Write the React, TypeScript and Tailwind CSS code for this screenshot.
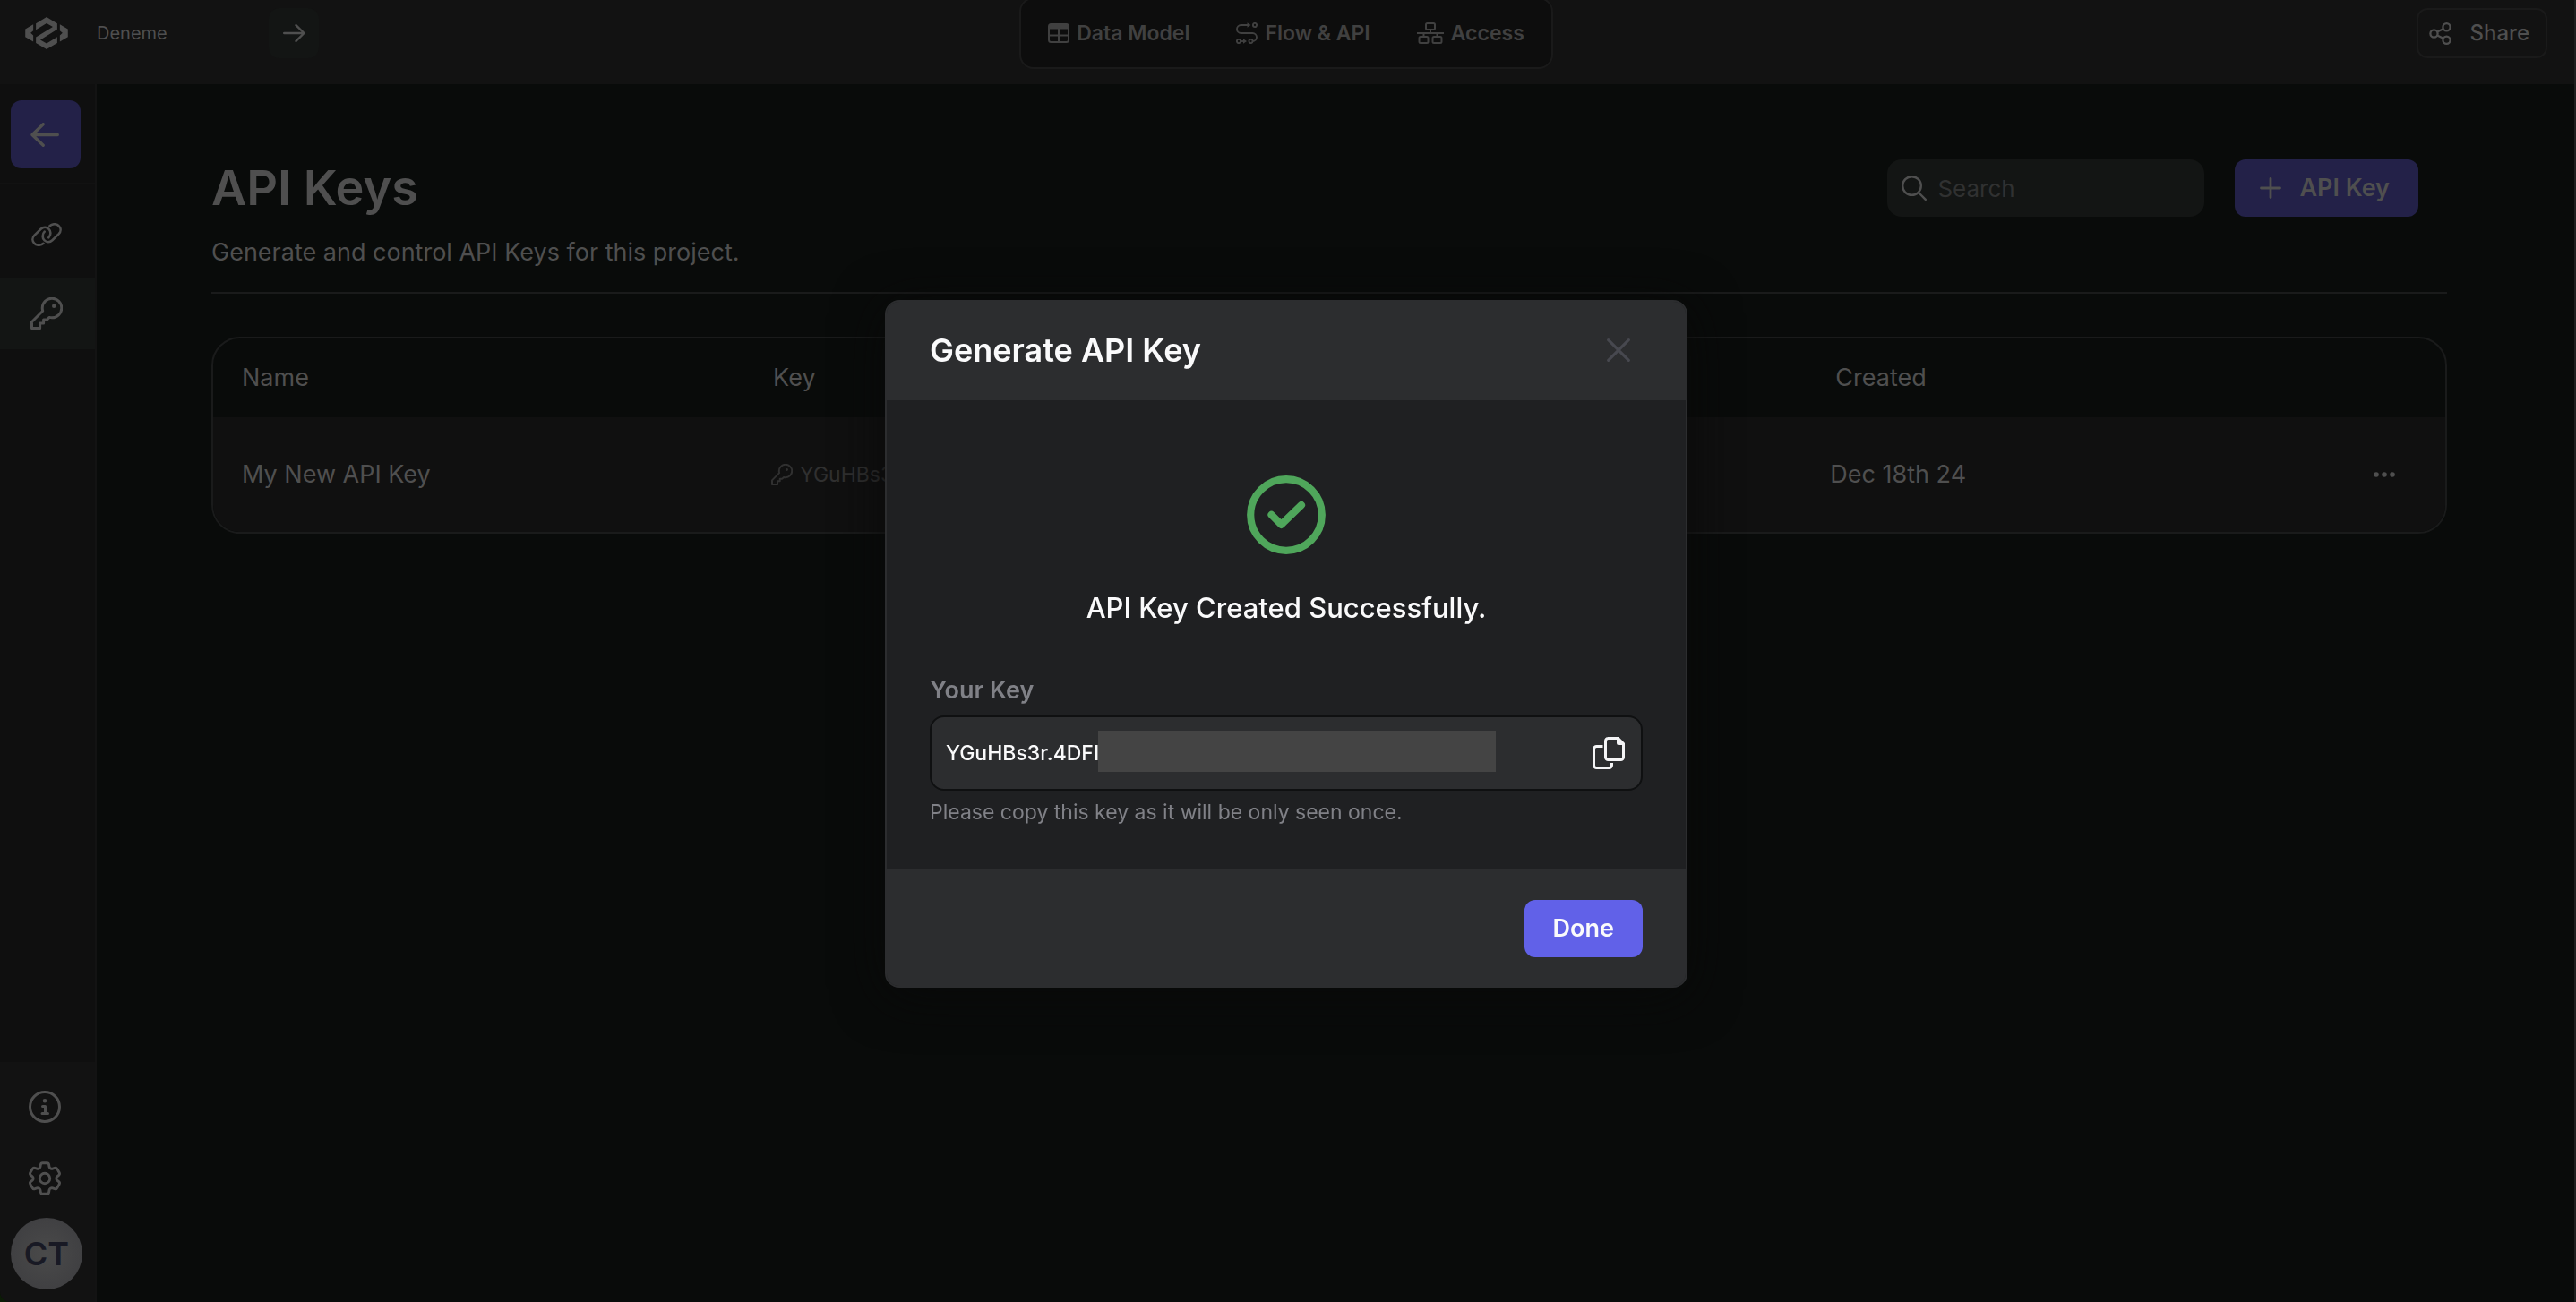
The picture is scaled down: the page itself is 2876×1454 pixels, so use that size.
import type { ReactNode } from "react";
import { HiOutlineCog6Tooth } from "react-icons/hi2";

function Logo() {
  return (
    <svg viewBox="84 60 144 109" className="h-9 w-12" fill="currentColor" aria-hidden="true">
      <path d="M120 82 156 60l36 22v20l-57 35 21 12 36-22v21l-36 21-36-21v-20l57-35-21-12-36 22z" />
      <path d="M84 101l27-16v21l-9 8 9 8v21l-27-16z" />
      <path d="M228 101l-27-16v21l9 8-9 8v21l27-16z" />
    </svg>
  );
}

function ArrowRight() {
  return (
    <svg viewBox="0 0 25 20" className="h-5 w-[25px]" fill="none" stroke="currentColor" strokeWidth="2.4" strokeLinecap="round" strokeLinejoin="round" aria-hidden="true">
      <path d="M1.2 10h22M14.5 1.2 23.5 10l-9 8.8" />
    </svg>
  );
}

function ArrowLeft() {
  return (
    <svg viewBox="0 0 32 27" className="h-[27px] w-8" fill="none" stroke="currentColor" strokeWidth="3.4" strokeLinecap="round" strokeLinejoin="round" aria-hidden="true">
      <path d="M30.3 13.5H2M14.2 1.7 2 13.5l12.2 11.8" />
    </svg>
  );
}

function LinkIcon() {
  return (
    <svg viewBox="0 0 34 26" className="h-[26px] w-[34px]" fill="none" stroke="currentColor" strokeWidth="2.6" strokeLinecap="round" aria-hidden="true">
      <path d="M13.5 22.8C10.5 25.4 5.5 25.4 3.2 22.7.7 20 .9 16.3 3.3 13.8l7.3-7C13.2 4.3 17 4.3 19.4 6.6c2.6 2.4 2.7 6.9-.1 9.7" />
      <path d="M20.5 3.2c3-2.6 8-2.6 10.3.1 2.5 2.7 2.3 6.4-.1 8.9l-7.3 7c-2.6 2.5-6.4 2.5-8.8.2-2.6-2.4-2.7-6.9.1-9.7" />
    </svg>
  );
}

function KeyIcon({ className }: { className: string }) {
  return (
    <svg viewBox="0 0 36 36" className={className} fill="none" stroke="currentColor" strokeWidth="3" strokeLinejoin="round" aria-hidden="true">
      <path d="M13.2 12A10.8 10.8 0 1 1 24 22.8q-1.5 0-2.9-.4L18.6 25h-4v4h-4v5.5H1.5v-7L13.7 15.2q-.5-1.6-.5-3.2Z" />
      <circle cx="26.2" cy="9.8" r="2.2" fill="currentColor" stroke="none" />
    </svg>
  );
}

function InfoIcon() {
  return (
    <svg viewBox="0 0 36 36" className="size-9" fill="none" stroke="currentColor" strokeWidth="3" aria-hidden="true">
      <circle cx="18" cy="18" r="16.5" />
      <circle cx="18" cy="11.3" r="2.3" fill="currentColor" stroke="none" />
      <path d="M15.5 17.5h3v8M15 25.5h6.5" strokeLinecap="round" strokeLinejoin="round" />
    </svg>
  );
}

function TableIcon() {
  return (
    <svg viewBox="0 0 24 22" className="h-[22px] w-6" fill="none" stroke="currentColor" strokeWidth="2" aria-hidden="true">
      <rect x="1" y="1" width="22" height="20" rx="2.5" />
      <path d="M1 4h22" strokeWidth="5" />
      <path d="M1 13.5h22M12 5v16" />
    </svg>
  );
}

function FlowIcon() {
  return (
    <svg viewBox="0 0 24 24" className="size-6" fill="none" stroke="currentColor" strokeWidth="1.9" aria-hidden="true">
      <circle cx="21" cy="3" r="2.1" />
      <circle cx="3" cy="21" r="2.1" />
      <circle cx="16.5" cy="21" r="2.1" />
      <path d="M13 3H5.5a4.5 4.5 0 0 0 0 9H18.5a4.5 4.5 0 0 1 0 9" />
      <path d="M5 21h3" />
      <path d="M12.5.2 16.5 3l-4 2.8zM8 18.2 12 21l-4 2.8z" fill="currentColor" stroke="none" />
    </svg>
  );
}

function AccessIcon() {
  return (
    <svg viewBox="0 0 30 24" className="h-6 w-[30px]" fill="none" stroke="currentColor" strokeWidth="2" aria-hidden="true">
      <rect x="10" y="1" width="10" height="7" rx="1.5" />
      <rect x="2.5" y="16" width="10" height="7" rx="1.5" />
      <rect x="17.5" y="16" width="10" height="7" rx="1.5" />
      <path d="M0 12h30M15 8v4M7.5 12v4M22.5 12v4" />
    </svg>
  );
}

function ShareIcon() {
  return (
    <svg viewBox="0 0 26 25" className="h-[25px] w-[26px]" fill="none" stroke="currentColor" strokeWidth="2.3" aria-hidden="true">
      <circle cx="5.5" cy="12.5" r="4.1" />
      <circle cx="19.5" cy="5.3" r="4.1" />
      <circle cx="19.5" cy="19.7" r="4.1" />
      <path d="M9.2 10.6l6.6-3.4M9.2 14.4l6.6 3.4" />
    </svg>
  );
}

function SearchIcon() {
  return (
    <svg viewBox="0 0 28 28" className="size-7 shrink-0" fill="none" stroke="currentColor" strokeWidth="2.4" strokeLinecap="round" aria-hidden="true">
      <circle cx="11.5" cy="11.5" r="10.3" />
      <path d="M19 19l7.8 7.8" />
    </svg>
  );
}

function PlusIcon() {
  return (
    <svg viewBox="0 0 24 24" className="size-6" fill="none" stroke="currentColor" strokeWidth="2.8" strokeLinecap="round" aria-hidden="true">
      <path d="M12 1.5v21M1.5 12h21" />
    </svg>
  );
}

function DotsIcon() {
  return (
    <svg viewBox="0 0 24 6" className="h-1.5 w-6" fill="currentColor" aria-hidden="true">
      <circle cx="3" cy="3" r="2.8" />
      <circle cx="12" cy="3" r="2.8" />
      <circle cx="21" cy="3" r="2.8" />
    </svg>
  );
}

function CloseIcon() {
  return (
    <svg viewBox="0 0 26 26" className="size-[26px]" fill="none" stroke="currentColor" strokeWidth="3.2" strokeLinecap="round" aria-hidden="true">
      <path d="M1.7 1.7l22.6 22.6M24.3 1.7l-22.6 22.6" />
    </svg>
  );
}

function CheckIcon() {
  return (
    <svg viewBox="0 0 88 88" className="size-[88px]" fill="none" stroke="currentColor" strokeWidth="8.2" strokeLinecap="round" strokeLinejoin="round" aria-hidden="true">
      <circle cx="44" cy="44" r="39.8" />
      <path d="M27.5 43.8 38.5 54.8 61 33" />
    </svg>
  );
}

function CopyIcon() {
  return (
    <svg viewBox="0 0 36 36" className="size-9" fill="none" stroke="currentColor" strokeWidth="3" aria-hidden="true">
      <path d="M17 1.5h11.5L34.5 7.5V22.5a3 3 0 0 1-3 3H17.5a3 3 0 0 1-3-3V4.5a3 3 0 0 1 3-3z" />
      <path d="M27 1v6a2 2 0 0 0 2 2h6.5V7L29 .5z" fill="currentColor" stroke="none" />
      <path d="M11.5 10.5h-7a3 3 0 0 0-3 3v18a3 3 0 0 0 3 3h14a3 3 0 0 0 3-3V29" />
    </svg>
  );
}

function NavTab({ icon, label }: { icon: ReactNode; label: string }) {
  return (
    <a href="#" className="flex items-center gap-2 text-[23px] font-semibold">
      {icon}
      {label}
    </a>
  );
}

function Header() {
  return (
    <header className="grid h-[94px] shrink-0 grid-cols-[1fr_auto_1fr] items-center bg-[#121212] pr-[30px] pb-5 pl-7 text-[#4f4f4f]">
      <div className="flex items-center">
        <Logo />
        <div className="ml-8 flex w-[248px] items-center justify-between">
          <span className="text-[20px]">Deneme</span>
          <button type="button" aria-label="Open project" className="flex size-14 items-center justify-center rounded-xl bg-[#131514]">
            <ArrowRight />
          </button>
        </div>
      </div>
      <nav aria-label="Sections" className="-my-2 flex h-20 items-center gap-[52px] rounded-2xl border-2 border-[#1a1a1a] bg-[#0d0d0d] px-[30px] text-[#404040]">
        <NavTab icon={<TableIcon />} label="Data Model" />
        <NavTab icon={<FlowIcon />} label="Flow & API" />
        <NavTab icon={<AccessIcon />} label="Access" />
      </nav>
      <button type="button" className="flex h-14 items-center gap-5 justify-self-end rounded-xl border-2 border-[#1a1a1a] pr-[18px] pl-3 text-[24px] font-medium">
        <ShareIcon />
        Share
      </button>
    </header>
  );
}

function Sidebar() {
  return (
    <aside className="flex w-[108px] shrink-0 flex-col overflow-hidden rounded-bl-xl border-r-2 border-[#131313] bg-[#0f0f0f] text-[#4f4f4f]">
      <div className="border-b-2 border-[#121212] pt-[18px] pb-4 pl-3">
        <button type="button" aria-label="Back" className="flex h-[76px] w-[78px] items-center justify-center rounded-xl bg-[#232148] pr-0.5">
          <ArrowLeft />
        </button>
      </div>
      <nav aria-label="Project settings" className="flex flex-col gap-2 pt-4">
        <a href="#" aria-label="Links" className="flex h-20 items-center justify-center pr-0.5">
          <LinkIcon />
        </a>
        <a href="#" aria-label="API keys" aria-current="page" className="flex h-20 items-center justify-center bg-[#131514] pr-0.5">
          <KeyIcon className="size-9" />
        </a>
      </nav>
      <div className="mt-auto flex flex-col bg-[#121212] pt-2.5 pb-3.5 pl-3">
        <button type="button" aria-label="Information" className="flex h-20 w-[76px] items-center justify-center">
          <InfoIcon />
        </button>
        <button type="button" aria-label="Settings" className="flex h-20 w-[76px] items-center justify-center">
          <HiOutlineCog6Tooth className="size-[46px]" />
        </button>
        <button type="button" aria-label="Account" className="mt-1 flex size-20 items-center justify-center rounded-full bg-radial from-[#4a4a4a] to-[#3c3c3f] text-[36px] font-semibold text-[#181924]">
          CT
        </button>
      </div>
    </aside>
  );
}

function KeysPage() {
  return (
    <main className="flex-1 bg-[#090b0a] pt-[84px] pr-[142px] pl-32 text-[#4f4f4f]">
      <div className="flex items-center justify-between pr-8">
        <h1 className="text-[54px] leading-[64px] font-semibold">API Keys</h1>
        <div className="flex items-center gap-[34px]">
          <label className="flex h-16 w-[354px] items-center gap-3 rounded-2xl bg-[#131514] px-4">
            <SearchIcon />
            <input type="search" aria-label="Search" placeholder="Search" className="w-full min-w-0 bg-transparent text-[26px] outline-none placeholder:text-[#303131]" />
          </label>
          <button type="button" className="flex h-16 items-center gap-5 rounded-xl bg-[#232148] pr-8 pl-7 text-[27px] font-semibold">
            <PlusIcon />
            API Key
          </button>
        </div>
      </div>
      <p className="mt-5 text-[27px] leading-10">Generate and control API Keys for this project.</p>
      <hr className="mt-6 border-t-2 border-[#1a1b1b]" />
      <div className="mt-12 overflow-hidden rounded-[32px] border-2 border-[#1a1b1b]">
        <table className="w-full table-fixed text-left text-[27px]">
          <colgroup>
            <col className="w-[23.8%]" />
            <col className="w-[47.6%]" />
            <col className="w-[23.8%]" />
            <col />
          </colgroup>
          <thead>
            <tr className="h-[88px]">
              <th scope="col" className="px-8 font-normal">Name</th>
              <th scope="col" className="px-8 font-normal">Key</th>
              <th scope="col" className="px-8 font-normal">Created</th>
              <th scope="col" aria-label="Actions" />
            </tr>
          </thead>
          <tbody>
            <tr className="h-32 bg-[#101010]">
              <td className="px-8">My New API Key</td>
              <td className="px-7.5">
                <span className="flex items-center gap-2 text-[23px] text-[#303030]">
                  <KeyIcon className="size-6" />
                  YGuHBs3r
                </span>
              </td>
              <td className="px-6.5">Dec 18th 24</td>
              <td className="pr-14">
                <button type="button" aria-label="Key actions" className="ml-auto flex h-8 items-center">
                  <DotsIcon />
                </button>
              </td>
            </tr>
          </tbody>
        </table>
      </div>
    </main>
  );
}

function KeyDialog() {
  return (
    <div className="fixed inset-0 flex items-center justify-center pr-1 pb-4">
      <section role="dialog" aria-modal="true" aria-labelledby="dialog-title" className="w-[896px] overflow-hidden rounded-2xl border-2 border-[#2c2d2f] bg-[#1f2022] shadow-[0_8px_56px_0_#090909]">
        <div className="flex h-[110px] items-center justify-between bg-[#2c2d2f] pr-[62px] pb-0.5 pl-12">
          <h2 id="dialog-title" className="text-[36px] font-semibold text-[#fafafb]">Generate API Key</h2>
          <button type="button" aria-label="Close" className="text-[#47484f]">
            <CloseIcon />
          </button>
        </div>
        <div className="flex flex-col px-12 pt-[84px] pb-12">
          <div className="flex flex-col items-center gap-9">
            <span className="text-[#4fa65b]">
              <CheckIcon />
            </span>
            <p className="text-[31px] leading-12 font-medium text-[#fafafb]">API Key Created Successfully.</p>
          </div>
          <label htmlFor="api-key" className="mt-12 text-[27px] leading-10 font-semibold text-[#808187]">Your Key</label>
          <div className="relative mt-2 flex h-[84px] items-center rounded-2xl border-2 border-[#0f1011] bg-[#2c2d2f] pr-[18px] pl-4">
            <input id="api-key" type="text" readOnly value="YGuHBs3r.4DFI" className="min-w-0 flex-1 bg-transparent text-[23px] font-medium text-[#fafafb] outline-none" />
            <span className="absolute top-[15px] left-[186px] h-[46px] w-[444px] bg-[#444444]" />
            <button type="button" aria-label="Copy key" className="text-[#f4f4f6]">
              <CopyIcon />
            </button>
          </div>
          <p className="mt-2 text-[23px] leading-8 text-[#808187]">Please copy this key as it will be only seen once.</p>
        </div>
        <div className="flex h-[130px] items-center justify-end bg-[#2c2d2f] px-12 pt-0.5">
          <button type="button" className="h-16 rounded-xl bg-[#6161e8] px-8 text-[27px] font-semibold text-[#fafafb]">Done</button>
        </div>
      </section>
    </div>
  );
}

export default function App() {
  return (
    <div className="flex h-screen flex-col border-r-2 border-[#1f1f1f] bg-[#0c1c06] font-[Inter,sans-serif]">
      <Header />
      <div className="flex min-h-0 flex-1">
        <Sidebar />
        <KeysPage />
      </div>
      <KeyDialog />
    </div>
  );
}
